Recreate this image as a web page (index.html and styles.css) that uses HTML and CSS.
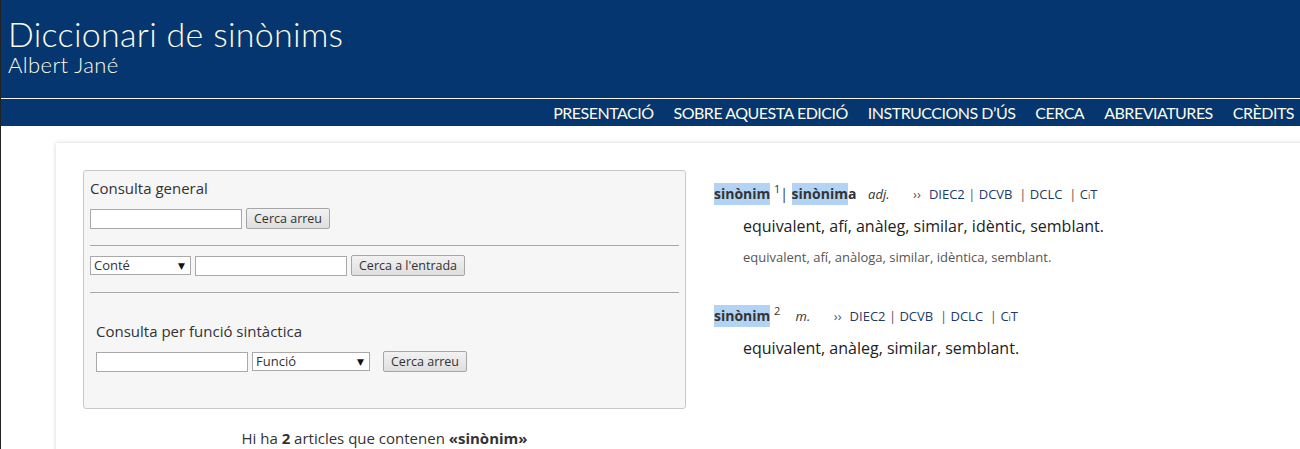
FILE: index.html
```html
<!DOCTYPE html>
<html>

<head>
    <title>Diccionari de sinònims</title>
    <link rel="stylesheet" href="styles.css">
</head>

<body>
    <div class="header">
        <div class="brand">
            <div class="title">Diccionari de sinònims</div>
            <div class="author">Albert Jané</div>
        </div>
    </div>
    <div class="menu">
        <a href="#">PRESENTACIÓ</a>
        <a href="#">SOBRE AQUESTA EDICIÓ</a>
        <a href="#">INSTRUCCIONS D’ÚS</a>
        <a href="#">CERCA</a>
        <a href="#">ABREVIATURES</a>
        <a href="#">CRÈDITS</a>
    </div>

    <div class="page">
        <div class="card">
            <div class="left">
                <form class="search-box">
                    <div class="label">Consulta general</div>
                    <div class="row">
                        <input type="text" class="field">
                        <button type="button" class="btn">Cerca arreu</button>
                    </div>
                    <hr>
                    <div class="row">
                        <span class="select small">Conté</span>
                        <input type="text" class="field">
                        <button type="button" class="btn">Cerca a l'entrada</button>
                    </div>
                    <hr>
                    <div class="indent">
                        <div class="label">Consulta per funció sintàctica</div>
                        <div class="row">
                            <input type="text" class="field">
                            <span class="select">Funció</span>
                            <button type="button" class="btn spaced">Cerca arreu</button>
                        </div>
                    </div>
                </form>
                <p class="count">Hi ha <b>2</b> articles que contenen <b>«sinònim»</b></p>
            </div>

            <div class="results">
                <div class="entry">
                    <div class="head">
                        <span class="hl">sinònim</span> <sup>1</sup>| <span class="hl">sinònim</span><b>a</b>
                        <i>adj.</i>
                        <span class="refs"><span class="arrow">››</span><a href="#">DIEC2</a> | <a href="#">DCVB</a> &nbsp;| <a href="#">DCLC</a> &nbsp;| <a href="#">C<small>i</small>T</a></span>
                    </div>
                    <div class="syn">equivalent, afí, anàleg, similar, idèntic, semblant.</div>
                    <div class="syn fem">equivalent, afí, anàloga, similar, idèntica, semblant.</div>
                </div>
                <div class="entry">
                    <div class="head">
                        <span class="hl">sinònim</span> <sup>2</sup> &nbsp;<i>m.</i>
                        <span class="refs"><span class="arrow">››</span><a href="#">DIEC2</a> | <a href="#">DCVB</a> &nbsp;| <a href="#">DCLC</a> &nbsp;| <a href="#">C<small>i</small>T</a></span>
                    </div>
                    <div class="syn">equivalent, anàleg, similar, semblant.</div>
                </div>
            </div>
        </div>
    </div>
</body>

</html>
```

FILE: styles.css
```css
html,
body {
    margin: 0;
    height: 100%;
    overflow: hidden;
}

body {
    font-family: "Open Sans", "DejaVu Sans", sans-serif;
    font-size: 14px;
    color: #333;
    background-color: #fff;
    border-left: 1px solid #222;
}

.header {
    background-color: #06366f;
    height: 98px;
    border-bottom: 1px solid #f4f4ea;
}

.brand {
    padding: 15px 0 0 7px;
    color: #fdfbe6;
    font-family: Lato, "Open Sans", sans-serif;
}

.title {
    font-size: 34px;
    font-weight: 300;
    line-height: 38px;
    letter-spacing: 0.3px;
}

.author {
    font-size: 22px;
    font-weight: 300;
    line-height: 22px;
    letter-spacing: 0.4px;
    margin-top: 1px;
}

.menu {
    background-color: #06366f;
    height: 27px;
    display: flex;
    justify-content: flex-end;
    align-items: center;
    gap: 20px;
    padding-right: 6px;
}

.menu a {
    color: #fdfbe6;
    text-decoration: none;
    font-family: Lato, "Open Sans", sans-serif;
    font-size: 16px;
    letter-spacing: -0.5px;
    line-height: 24px;
}

.page {
    padding: 17px 0 0 55px;
}

.card {
    background-color: #fff;
    width: 1300px;
    height: 400px;
    box-shadow: 0 0 4px rgba(0, 0, 0, 0.18);
    padding: 27px 0 0 27px;
    display: flex;
    gap: 28px;
}

.search-box {
    width: 589px;
    height: 225px;
    background-color: #f6f6f6;
    border: 1px solid #c8c8c8;
    border-radius: 3px;
    padding: 6px 6px 6px 6px;
    margin: 0;
}

.label {
    font-size: 15px;
    line-height: 22px;
    color: #333;
}

.row {
    display: flex;
    align-items: center;
    gap: 4px;
    margin-top: 9px;
}

.field {
    width: 148px;
    height: 16px;
    border: 1px solid #a9a9a9;
    padding: 1px;
    margin: 0;
    background: #fff;
}

.btn {
    font-family: "Open Sans", "DejaVu Sans", sans-serif;
    font-size: 12.5px;
    color: #333;
    height: 21px;
    padding: 0 7px;
    border: 1px solid #a6a6a6;
    border-radius: 2px;
    background: linear-gradient(#f2f2f2, #dedede);
}

.btn.spaced {
    margin-left: 9px;
}

.select {
    position: relative;
    display: inline-block;
    box-sizing: border-box;
    width: 118px;
    height: 19px;
    line-height: 17px;
    border: 1px solid #a9a9a9;
    background: #fff;
    font-size: 13px;
    padding-left: 3px;
    color: #333;
}

.select.small {
    width: 101px;
}

.select::after {
    content: "▼";
    position: absolute;
    right: 5px;
    top: 0;
    font-size: 9px;
    color: #111;
}

hr {
    border: none;
    border-top: 1px solid #a8a8a8;
    margin: 16px 0 9px;
}

.indent {
    padding: 18px 0 0 6px;
}

.count {
    text-align: center;
    width: 603px;
    margin: 19px 0 0;
    font-size: 15px;
    color: #333;
}

.results {
    padding-top: 13px;
}

.entry {
    margin-bottom: 37px;
}

.head {
    font-size: 14px;
    line-height: 22px;
    color: #333;
}

.hl {
    background-color: #b3d3f5;
    font-weight: bold;
    padding: 1px 0 2px;
}

.head sup {
    font-size: 11px;
    line-height: 0;
}

.head i {
    font-size: 13px;
    margin-left: 8px;
}

.refs {
    font-size: 13px;
    margin-left: 20px;
    color: #555;
}

.refs .arrow {
    margin-right: 8px;
}

.refs a {
    color: #1d3a6a;
    text-decoration: none;
}

.refs small {
    font-size: 9px;
}

.syn {
    padding-left: 29px;
    font-size: 16px;
    line-height: 22px;
    margin-top: 8px;
    color: #222;
}

.syn.fem {
    font-size: 13px;
    color: #555;
    margin-top: 9px;
}
```
